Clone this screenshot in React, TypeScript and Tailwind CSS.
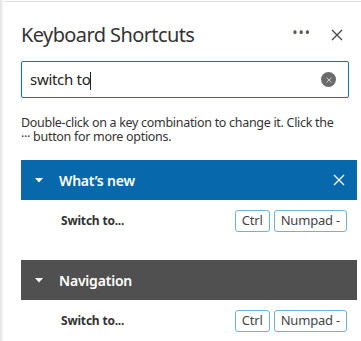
import React from 'react';

const font = { fontFamily: '"Segoe UI", "Noto Sans", "Open Sans", sans-serif' };

const Caret = () => (
  <svg width="8" height="5" viewBox="0 0 8 5" className="shrink-0">
    <path d="M0 0 L8 0 L4 4.5 Z" fill="white" />
  </svg>
);

const Cross = ({ size = 12, color = '#444' }: { size?: number; color?: string }) => (
  <svg width={size} height={size} viewBox="0 0 12 12">
    <path d="M1 1 L11 11 M11 1 L1 11" stroke={color} strokeWidth="1.3" />
  </svg>
);

const Keys = () => (
  <div className="flex gap-[4px]">
    {['Ctrl', 'Numpad -'].map((k) => (
      <span
        key={k}
        className="h-[22px] px-[6px] flex items-center border border-[#6bb3dc] rounded-[3px] text-[13px] tracking-[-0.2px] text-[#444]"
      >
        {k}
      </span>
    ))}
  </div>
);

const Section = ({ title, color, closable }: { title: string; color: string; closable?: boolean }) => (
  <div>
    <div className={`h-[40px] flex items-center pl-[14px] pr-[12px] ${color}`}>
      <Caret />
      <span className="ml-[16px] text-[14px] font-semibold text-white flex-1 tracking-[-0.2px]">{title}</span>
      {closable && <Cross size={12} color="white" />}
    </div>
    <div className="h-[42px] flex items-center pl-[40px] pr-[10px] justify-between">
      <span className="text-[12px] font-bold text-[#333] tracking-[-0.2px]">Switch to...</span>
      <Keys />
    </div>
  </div>
);

export default function App() {
  return (
    <div className="w-[361px] h-[341px] bg-white overflow-hidden flex" style={font}>
      <div className="w-[4px] h-full bg-gradient-to-r from-[#e2e2e2] to-white shrink-0" />
      <div className="flex-1 border-t border-[#e1e1e1] mt-[1px]">
        <div className="pl-[17px] pr-[4px]">
          <div className="flex items-center h-[32px] mt-[17px] pr-[14px]">
            <h1 className="text-[20px] text-[#333] flex-1 leading-none tracking-[-0.6px]">Keyboard Shortcuts</h1>
            <span className="text-[#555] text-[14px] tracking-[1px] mr-[20px] -mt-[6px]">•••</span>
            <Cross size={12} color="#444" />
          </div>
          <div className="mt-[10px] mr-[8px] h-[37px] border border-[#0a73c0] rounded-[2px] flex items-center pl-[8px] pr-[12px]">
            <span className="text-[15px] text-[#222] flex-1 tracking-[-0.3px]">
              switch to<span className="inline-block w-[1px] h-[18px] bg-[#222] align-middle" />
            </span>
            <span className="w-[15px] h-[15px] rounded-full bg-[#6b6b6b] flex items-center justify-center">
              <Cross size={6} color="white" />
            </span>
          </div>
          <p className="mt-[18px] mr-[14px] text-[12.5px] leading-[14px] tracking-[-0.3px] text-[#333]">
            Double-click on a key combination to change it. Click the ··· button for more options.
          </p>
          <div className="mt-[16px]">
            <Section title="What’s new" color="bg-[#0769ab]" closable />
            <div className="h-[18px]" />
            <Section title="Navigation" color="bg-[#505050]" />
          </div>
        </div>
      </div>
    </div>
  );
}
